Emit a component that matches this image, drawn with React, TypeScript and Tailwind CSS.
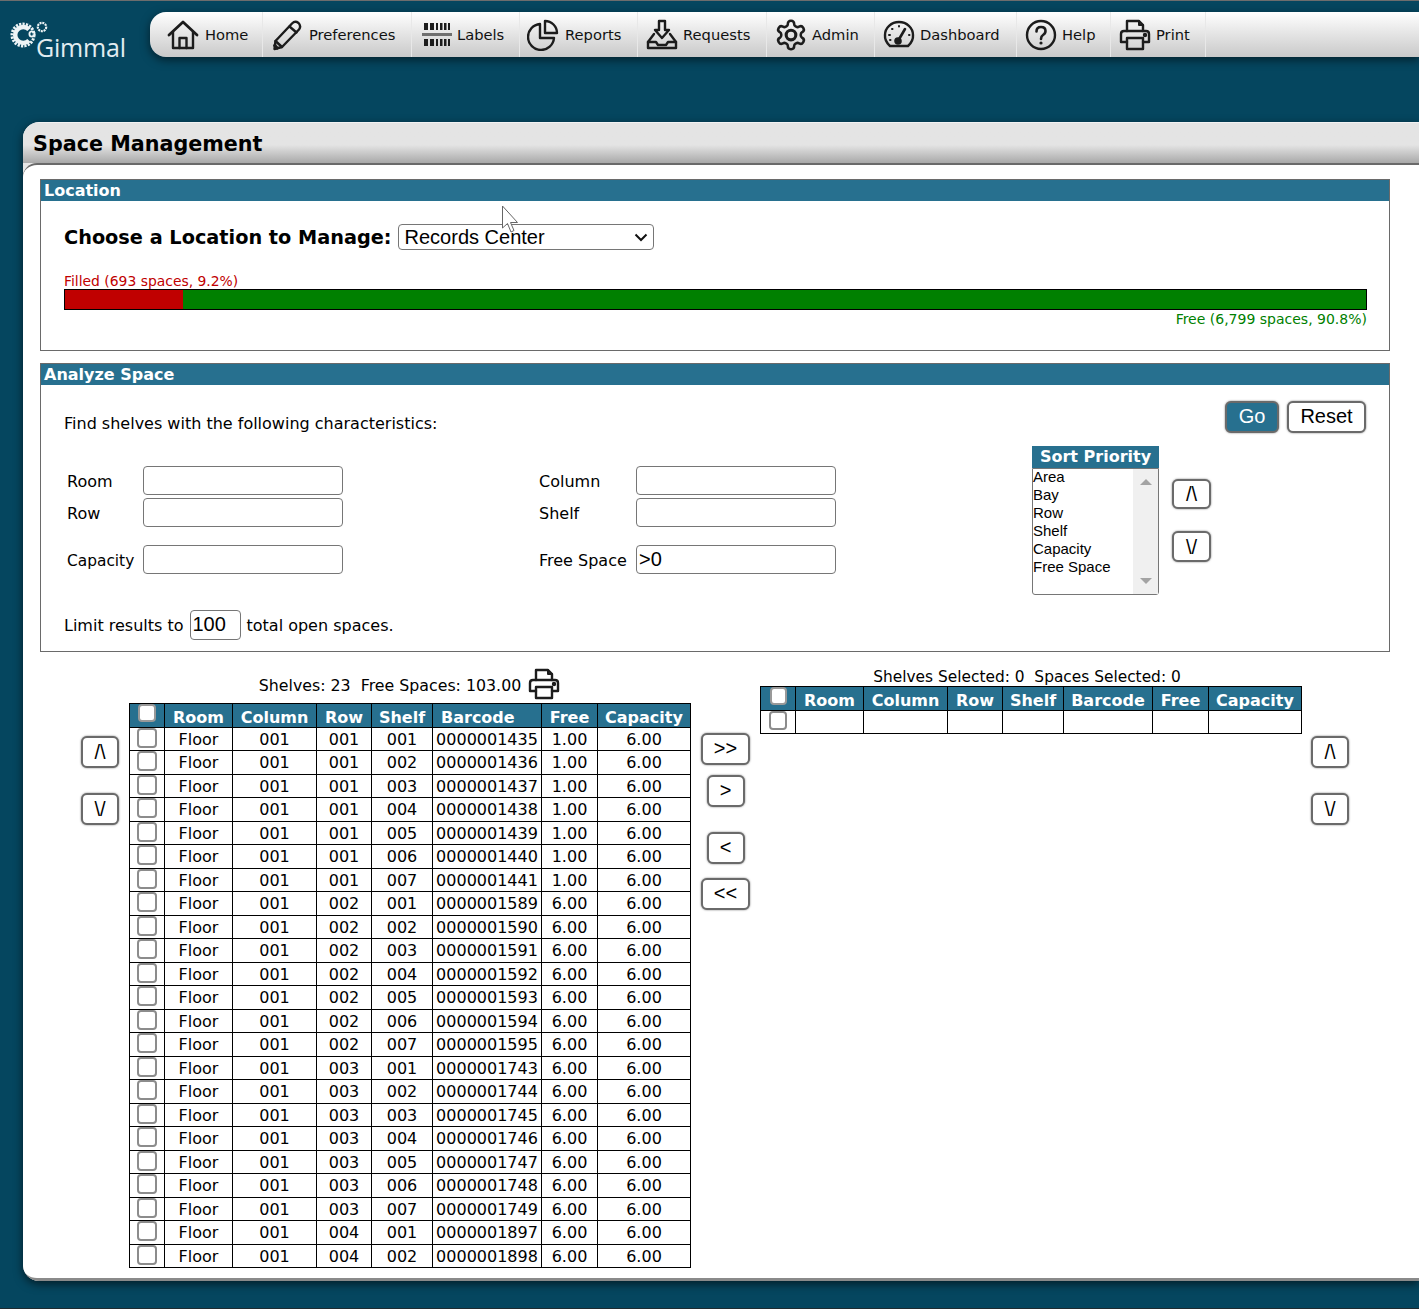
import React from "react";

const stroke = { fill: "none", stroke: "#1c1c1c", strokeWidth: 2.400, strokeLinecap: "round", strokeLinejoin: "round" } as const;

const HomeIcon = () => (
  <svg width="32" height="32" viewBox="0 0 32 32" {...stroke}>
    <path d="M2 16 L16 3 L30 16" strokeWidth="2.800" />
    <path d="M6 13 V29 H26 V13" />
    <path d="M12.500 29 V19 H19.500 V29" />
  </svg>
);
const PencilIcon = () => (
  <svg width="32" height="32" viewBox="0 0 32 32" {...stroke}>
    <path d="M21 4.500 Q24 1.500 27.500 4 Q30.500 7 28 10.500 L11 28 L3.500 30 L4.500 22 Z" />
    <path d="M18.500 7.500 L25.500 13.500" />
    <path d="M4.500 22 L11 28" />
    <path d="M3.800 26.500 L6 29" strokeWidth="3.400" />
  </svg>
);
const LabelsIcon = () => (
  <svg width="32" height="32" viewBox="0 0 32 32">
    <g fill="#1c1c1c">
      <rect x="3" y="4" width="4" height="7" />
      <rect x="9" y="4" width="4" height="7" />
      <rect x="15" y="4" width="2" height="7" />
      <rect x="19" y="4" width="2.500" height="7" />
      <rect x="23" y="4" width="2.500" height="7" />
      <rect x="27" y="4" width="2" height="7" />
      <rect x="3" y="20" width="4" height="7" />
      <rect x="9" y="20" width="4" height="7" />
      <rect x="15" y="20" width="2" height="7" />
      <rect x="19" y="20" width="2.500" height="7" />
      <rect x="23" y="20" width="2.500" height="7" />
      <rect x="27" y="20" width="2" height="7" />
    </g>
    <rect x="1" y="14" width="30" height="3" fill="#6f6f6f" />
  </svg>
);
const ReportsIcon = () => (
  <svg width="32" height="32" viewBox="0 0 32 32" {...stroke}>
    <path d="M13 5 A13 13 0 1 0 27 19 H13 Z" />
    <path d="M18 2 A12 12 0 0 1 30 14 H18 Z" />
  </svg>
);
const RequestsIcon = () => (
  <svg width="32" height="32" viewBox="0 0 32 32" {...stroke}>
    <path d="M13 2 H19 V11 H23 L16 19 L9 11 H13 Z" />
    <path d="M8 15 L2 23 V29 H30 V23 L24 15" />
    <path d="M2 23 H10 L12 26 H20 L22 23 H30" />
  </svg>
);
const AdminIcon = () => (
  <svg width="34" height="34" viewBox="0 0 24 24" fill="none" stroke="#1c1c1c" strokeWidth="1.800" strokeLinecap="round" strokeLinejoin="round" className="-mx-[1px]">
    <path d="M12.220 2h-.44a2 2 0 0 0-2 2v.18a2 2 0 0 1-1 1.730l-.43.25a2 2 0 0 1-2 0l-.15-.08a2 2 0 0 0-2.730.73l-.22.38a2 2 0 0 0 .73 2.730l.15.1a2 2 0 0 1 1 1.720v.51a2 2 0 0 1-1 1.740l-.15.09a2 2 0 0 0-.73 2.730l.22.38a2 2 0 0 0 2.730.73l.15-.08a2 2 0 0 1 2 0l.43.25a2 2 0 0 1 1 1.730V20a2 2 0 0 0 2 2h.44a2 2 0 0 0 2-2v-.18a2 2 0 0 1 1-1.730l.43-.25a2 2 0 0 1 2 0l.15.08a2 2 0 0 0 2.730-.73l.22-.39a2 2 0 0 0-.73-2.730l-.15-.08a2 2 0 0 1-1-1.740v-.5a2 2 0 0 1 1-1.740l.15-.09a2 2 0 0 0 .73-2.730l-.22-.38a2 2 0 0 0-2.730-.73l-.15.08a2 2 0 0 1-2 0l-.43-.25a2 2 0 0 1-1-1.730V4a2 2 0 0 0-2-2z" />
    <circle cx="12" cy="12" r="3.400" strokeWidth="2.200" />
  </svg>
);
const DashIcon = () => (
  <svg width="32" height="32" viewBox="0 0 32 32" {...stroke}>
    <path d="M7 27 Q1.500 22 2 16 A14 13 0 0 1 30 16 Q30.500 22 25 27 Z" />
    <path d="M15 22 L22 10" strokeWidth="2.600" />
    <circle cx="15" cy="22" r="2.600" fill="#1c1c1c" />
    <path d="M6 16 h1 M9 10 h.5 M16 7 v.5 M26 16 h.5 M7 21 h.5" strokeWidth="2" />
  </svg>
);
const HelpIcon = () => (
  <svg width="32" height="32" viewBox="0 0 32 32" {...stroke}>
    <circle cx="16" cy="16" r="14" />
    <path d="M11.500 12.500 Q11.500 8 16 8 Q20.500 8 20.500 12 Q20.500 14.500 18 16 Q16 17.200 16 20" strokeWidth="2.600" />
    <circle cx="16" cy="24" r="1.600" fill="#1c1c1c" stroke="none" />
  </svg>
);
const PrintIcon = ({ size = 32 }: { size?: number }) => (
  <svg width={size} height={size} viewBox="0 0 32 32" {...stroke}>
    <path d="M8 12 V2 H20 L24 6 V12" />
    <path d="M20 2 V6 H24" strokeWidth="2" />
    <path d="M8 23 H2 V15 Q2 12 5 12 H27 Q30 12 30 15 V23 H24" />
    <path d="M8 19 H24 V30 H8 Z" />
    <circle cx="26" cy="16" r="1" fill="#1c1c1c" />
  </svg>
);

const nav = [
  { label: "Home", icon: <HomeIcon />, cls: "w-[113px] pl-[17px] gap-[6px]" },
  { label: "Preferences", icon: <PencilIcon />, cls: "w-[149px] pl-[8px] gap-[6px]" },
  { label: "Labels", icon: <LabelsIcon />, cls: "w-[108px] pl-[9px] gap-[4px]" },
  { label: "Reports", icon: <ReportsIcon />, cls: "w-[118px] pl-[7px] gap-[6px]" },
  { label: "Requests", icon: <RequestsIcon />, cls: "w-[129px] pl-[8px] gap-[5px]" },
  { label: "Admin", icon: <AdminIcon />, cls: "w-[108px] pl-[8px] gap-[5px]" },
  { label: "Dashboard", icon: <DashIcon />, cls: "w-[142px] pl-[8px] gap-[5px]" },
  { label: "Help", icon: <HelpIcon />, cls: "w-[94px] pl-[8px] gap-[5px]" },
  { label: "Print", icon: <PrintIcon />, cls: "w-[95px] pl-[8px] gap-[5px]" },
];

const btn =
  "border-2 border-[#6a6a6a] rounded-[6px] bg-white text-black font-['Liberation_Sans',sans-serif] text-[20px] leading-none flex items-center justify-center shadow-[0_0_2px_rgba(0,0,0,0.55)]";
const check = "block appearance-none bg-white border-2 border-[#8c8c8c] rounded-[4px]";
const field =
  "block border border-[#767676] rounded-[4px] h-[29px] w-[200px] px-[2px] pb-[2px] bg-white text-[20px] font-['Liberation_Sans',sans-serif] text-black outline-none";
const label = "leading-[20px] pt-[2px]";

const rows: string[][] = [];
const groups: [string, string[], number, string][] = [
  ["001", ["001", "002", "003", "004", "005", "006", "007"], 1435, "1.00"],
  ["002", ["001", "002", "003", "004", "005", "006", "007"], 1589, "6.00"],
  ["003", ["001", "002", "003", "004", "005", "006", "007"], 1743, "6.00"],
  ["004", ["001", "002"], 1897, "6.00"],
];
groups.forEach(([row, shelves, start, free]) => {
  shelves.forEach((s, i) => rows.push([row, s, "000000" + (start + i), free]));
});

const headers = ["Room", "Column", "Row", "Shelf", "Barcode", "Free", "Capacity"];
const th = "border-x border-black font-bold text-white text-[16px] leading-none align-bottom pb-[1px] text-center p-0";
const td = "border border-black text-[16px] leading-none text-center p-0 pt-[4px] align-top whitespace-nowrap";

function LeftTable() {
  return (
    <table className="border-collapse table-fixed w-[561px]">
      <colgroup>
        <col className="w-[35px]" />
        <col className="w-[68px]" />
        <col className="w-[84px]" />
        <col className="w-[55px]" />
        <col className="w-[61px]" />
        <col className="w-[109px]" />
        <col className="w-[56px]" />
        <col className="w-[93px]" />
      </colgroup>
      <thead>
        <tr className="h-[24px] bg-[#27708f] border border-black">
          <th className={th + " relative"}>
            <input type="checkbox" className={check + " absolute left-[8px] top-0 w-[18px] h-[18px] border-[#999]"} />
          </th>
          {headers.map((h) => (
            <th key={h} className={h === "Barcode" ? th + " !text-left pl-[8px]" : th}>{h}</th>
          ))}
        </tr>
      </thead>
      <tbody>
        {rows.map(([row, shelf, code, free], i) => (
          <tr key={code} className={i % 2 === 0 ? "h-[23px]" : "h-[24px]"}>
            <td className={td + " relative"}>
              <input type="checkbox" className={check + " absolute left-[7px] top-0 w-[20px] h-[20px]"} />
            </td>
            <td className={td}>Floor</td>
            <td className={td}>001</td>
            <td className={td}>{row}</td>
            <td className={td}>{shelf}</td>
            <td className={td}>{code}</td>
            <td className={td}>{free}</td>
            <td className={td}>6.00</td>
          </tr>
        ))}
      </tbody>
    </table>
  );
}

function RightTable() {
  return (
    <table className="border-collapse table-fixed w-[541px]">
      <colgroup>
        <col className="w-[35px]" />
        <col className="w-[68px]" />
        <col className="w-[84px]" />
        <col className="w-[55px]" />
        <col className="w-[61px]" />
        <col className="w-[89px]" />
        <col className="w-[56px]" />
        <col className="w-[93px]" />
      </colgroup>
      <thead>
        <tr className="h-[24px] bg-[#27708f] border border-black">
          <th className={th + " relative"}>
            <input type="checkbox" className={check + " absolute left-[9px] top-0 w-[17px] h-[18px] border-[#999]"} />
          </th>
          {headers.map((h) => (
            <th key={h} className={th}>{h}</th>
          ))}
        </tr>
      </thead>
      <tbody>
        <tr className="h-[23px]">
          <td className={td + " relative"}>
            <input type="checkbox" className={check + " absolute left-[8px] top-0 w-[18px] h-[19px]"} />
          </td>
          {headers.map((h) => (
            <td key={h} className={td}></td>
          ))}
        </tr>
      </tbody>
    </table>
  );
}

function UpDown({ cls }: { cls: string }) {
  return (
    <div className={"flex flex-col gap-[25px] " + cls}>
      <button className={btn + " w-[38px] h-[32px]"}>/\</button>
      <button className={btn + " w-[38px] h-[32px]"}>\/</button>
    </div>
  );
}

export default function App() {
  return (
    <div className="h-[1309px] overflow-hidden bg-[#05465f] border-t border-[#6d6d6d] border-b border-b-[#1e2b30] font-['DejaVu_Sans',sans-serif] text-black">
      {/* top bar */}
      <div className="flex pt-[11px] h-[121px] items-start">
        <div className="relative w-[150px] h-[45px] shrink-0">
          <svg className="absolute left-[10px] top-[8px]" width="40" height="32" viewBox="0 0 40 32">
            <circle cx="13" cy="15" r="11" fill="none" stroke="#eef4f6" strokeWidth="3" strokeDasharray="2.200 1.200" />
            <path d="M19 9.500 A8 8 0 1 0 19 20.500" fill="none" stroke="#eef4f6" strokeWidth="4.500" />
            <circle cx="22" cy="14" r="2.600" fill="none" stroke="#eef4f6" strokeWidth="1.800" />
            <circle cx="32" cy="7" r="4.200" fill="none" stroke="#eef4f6" strokeWidth="2.200" strokeDasharray="2 .8" />
          </svg>
          <span className="absolute left-[36px] top-[18px] font-['Open_Sans',sans-serif] font-medium text-[25px] leading-[34px] tracking-[-0.200px] text-[#e2edf1]">Gimmal</span>
        </div>
        <nav className="flex-1 flex h-[45px] rounded-l-[16px] bg-gradient-to-b from-white to-[#c9c9c9] shadow-[0_3px_10px_rgba(0,0,0,0.55)]">
          {nav.map((n) => (
            <div key={n.label} className={"flex items-center border-r border-[#e8e8e8] shrink-0 text-[14.700px] text-[#111] " + n.cls}>
              {n.icon}
              <span className="pt-[2px]">{n.label}</span>
            </div>
          ))}
        </nav>
      </div>

      {/* card */}
      <div className="ml-[23px] h-[1159px] rounded-l-[16px] bg-[#e6e6e6] shadow-[0_3px_10px_rgba(0,0,0,0.6)] border-t border-[#f2f2f2] overflow-hidden flex flex-col">
        <div className="h-[40px] shrink-0 pl-[10px] pt-[2px] flex items-center bg-gradient-to-b from-[#e4e4e4] from-[55%] to-[#a9a9a9]">
          <h1 className="text-[20.700px] font-bold leading-none text-black">Space Management</h1>
        </div>
        <div className="flex-1 bg-white rounded-l-[14px] border-t-2 border-[#6a6a6a] border-b-[3px] border-b-[#8a8a8a] pl-[17px] pt-[14px]">
          {/* Location */}
          <section className="relative w-[1350px] h-[172px] border border-[#6a6a6a] flex flex-col">
            <h2 className="h-[21px] bg-[#27708f] text-white font-bold text-[16px] leading-[21px] pl-[3px] shrink-0">Location</h2>
            <div className="pl-[23px] pr-[22px] pt-[23px]">
              <div className="flex items-center gap-[6px] h-[26px]">
                <span className="text-[19.300px] font-bold leading-none pt-[2px]">Choose a Location to Manage:</span>
                <div className="relative w-[256px] h-[26px] border border-[#767676] rounded-[4px] flex items-center pl-[6px] font-['Liberation_Sans',sans-serif] text-[20px]">
                  Records Center
                  <svg className="absolute right-[5px] top-[8px]" width="14" height="9" viewBox="0 0 14 9" fill="none" stroke="#111" strokeWidth="2">
                    <path d="M1.500 1.500 L7 7 L12.500 1.500" />
                  </svg>
                </div>
              </div>
              <div className="mt-[23px] text-[13.900px] leading-[16px] text-[#c00000] h-[16px]">Filled (693 spaces, 9.2%)</div>
              <div className="flex h-[21px] border border-black">
                <div className="w-[118px] bg-[#c00000]"></div>
                <div className="flex-1 bg-[#008000]"></div>
              </div>
              <div className="text-right text-[14px] leading-[18px] text-[#008000]">Free (6,799 spaces, 90.8%)</div>
            </div>
            <svg className="absolute left-[460px] top-[25px]" width="20" height="30" viewBox="0 0 20 30">
              <path d="M1.500 1 V23 L6.500 18.500 L10 27 L13 25.500 L9.500 17.500 H16.500 Z" fill="#fff" stroke="#666" strokeWidth="1" />
            </svg>
          </section>

          {/* Analyze */}
          <section className="mt-[12px] w-[1350px] h-[289px] border border-[#6a6a6a] flex flex-col">
            <h2 className="h-[21px] bg-[#27708f] text-white font-bold text-[16px] leading-[21px] pl-[3px] shrink-0">Analyze Space</h2>
            <div className="pl-[23px] pr-[23px] pt-[16px]">
              <div className="flex justify-between items-start h-[32px]">
                <span className="mt-[13px] text-[16px] leading-[20px]">Find shelves with the following characteristics:</span>
                <div className="flex gap-[8px]">
                  <button className={btn + " w-[54px] h-[32px] pb-[2px] !bg-[#27708f] !text-white"}>Go</button>
                  <button className={btn + " w-[79px] h-[32px] pb-[2px]"}>Reset</button>
                </div>
              </div>
              <div className="flex mt-[13px] items-start">
                <div className="mt-[20px] ml-[3px] grid grid-cols-[76px_200px_196px_97px_200px] items-center text-[16px]">
                  <span className={label}>Room</span>
                  <input className={field} />
                  <span className={label + " col-start-4"}>Column</span>
                  <input className={field} />
                  <span className={label + " mt-[3px]"}>Row</span>
                  <input className={field + " mt-[3px]"} />
                  <span className={label + " col-start-4 mt-[3px]"}>Shelf</span>
                  <input className={field + " mt-[3px]"} />
                  <span className={label + " mt-[18px] text-[15.400px]"}>Capacity</span>
                  <input className={field + " mt-[18px]"} />
                  <span className={label + " col-start-4 mt-[18px]"}>Free Space</span>
                  <input className={field + " mt-[18px]"} defaultValue=">0" />
                </div>
                <div className="ml-[196px] w-[127px] shrink-0">
                  <div className="h-[22px] bg-[#27708f] text-white font-bold text-[16px] leading-[21px] text-center">Sort Priority</div>
                  <div className="relative h-[127px] border border-[#767676] rounded-b-[3px] font-['Liberation_Sans',sans-serif] text-[15px] leading-[18px]">
                    <div className="-mt-[1px]">
                      {["Area", "Bay", "Row", "Shelf", "Capacity", "Free Space"].map((s) => (
                        <div key={s}>{s}</div>
                      ))}
                    </div>
                    <div className="absolute right-0 top-0 bottom-0 w-[25px] bg-[#f0f0f0] flex flex-col items-center justify-between py-[10px]">
                      <div className="w-0 h-0 border-x-[6px] border-x-transparent border-b-[6px] border-b-[#a3a3a3]"></div>
                      <div className="w-0 h-0 border-x-[6px] border-x-transparent border-t-[6px] border-t-[#a3a3a3]"></div>
                    </div>
                  </div>
                </div>
                <div className="ml-[13px] mt-[33px] flex flex-col gap-[22px]">
                  <button className={btn + " w-[39px] h-[30px]"}>/\</button>
                  <button className={btn + " w-[39px] h-[31px]"}>\/</button>
                </div>
              </div>
              <div className="flex items-center mt-[15px] h-[30px] text-[16px]">
                <span className="pt-[2px]">Limit results to</span>
                <input className={field + " !w-[51px] h-[30px] ml-[6px] mr-[6px]"} defaultValue="100" />
                <span className="pt-[2px]">total open spaces.</span>
              </div>
            </div>
          </section>

          {/* Lists */}
          <div className="flex items-start">
            <UpDown cls="ml-[41px] mt-[84px] w-[38px]" />
            <div className="ml-[10px] flex flex-col items-center pt-[16px]">
              <div className="h-[35px] flex items-center gap-[7px] text-[15.800px] whitespace-pre pr-[1px]">
                <span>Shelves: 23  Free Spaces: 103.00</span>
                <span className="-mt-[3px]"><PrintIcon size={32} /></span>
              </div>
              <LeftTable />
            </div>
            <div className="ml-[10px] mt-[81px] w-[49px] flex flex-col items-center">
              <button className={btn + " w-[49px] h-[32px] pb-[2px]"}>&gt;&gt;</button>
              <button className={btn + " w-[38px] h-[32px] mt-[10px] pb-[2px]"}>&gt;</button>
              <button className={btn + " w-[38px] h-[32px] mt-[25px] pb-[2px]"}>&lt;</button>
              <button className={btn + " w-[49px] h-[32px] mt-[14px] pb-[2px]"}>&lt;&lt;</button>
            </div>
            <div className="ml-[10px] flex flex-col items-center pt-[18px]">
              <div className="h-[16px] flex items-center text-[15.400px] leading-none whitespace-pre pr-[8px]">Shelves Selected: 0  Spaces Selected: 0</div>
              <RightTable />
            </div>
            <UpDown cls="ml-[9px] mt-[84px] w-[38px]" />
          </div>
        </div>
      </div>
    </div>
  );
}
